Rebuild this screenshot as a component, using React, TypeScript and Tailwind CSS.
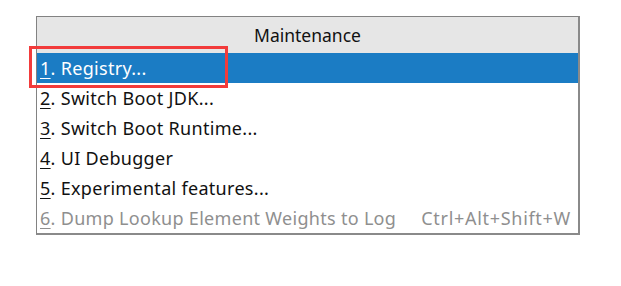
import React from "react";

const items = [
  { n: "1", label: ". Registry...", selected: true },
  { n: "2", label: ". Switch Boot JDK..." },
  { n: "3", label: ". Switch Boot Runtime..." },
  { n: "4", label: ". UI Debugger" },
  { n: "5", label: ". Experimental features..." },
  { n: "6", label: ". Dump Lookup Element Weights to Log", disabled: true, shortcut: "Ctrl+Alt+Shift+W" },
];

export default function App() {
  return (
    <div
      className="w-[621px] h-[286px] bg-white relative"
      style={{ fontFamily: '"Noto Sans", "Open Sans", sans-serif' }}
    >
      <div className="pt-[16px] pl-[36px]">
        <div className="w-[544px] border border-[#828282] border-r-2 border-b-2 border-r-[#8a8a8a] border-b-[#8a8a8a] bg-white">
          <div className="h-[36px] bg-[#e6e6e6] flex items-center justify-center text-[17.5px] text-[#111]">
            Maintenance
          </div>
          {items.map((it) => (
            <div
              key={it.n}
              className={
                "h-[30px] flex items-center pl-[3px] pr-[7px] text-[18px] tracking-[0.3px] " +
                (it.selected
                  ? "bg-[#1b7cc4] text-white"
                  : it.disabled
                  ? "text-[#8f8f8f]"
                  : "text-[#111]")
              }
            >
              <span className="flex-1 whitespace-nowrap">
                <span className="underline underline-offset-[3px]">{it.n}</span>
                {it.label}
              </span>
              {it.shortcut && (
                <span className="whitespace-nowrap tracking-[0.7px]">{it.shortcut}</span>
              )}
            </div>
          ))}
        </div>
      </div>
      <div className="absolute left-[29px] top-[46px] w-[199px] h-[42px] border-[3px] border-[#f23b3b]" />
    </div>
  );
}
